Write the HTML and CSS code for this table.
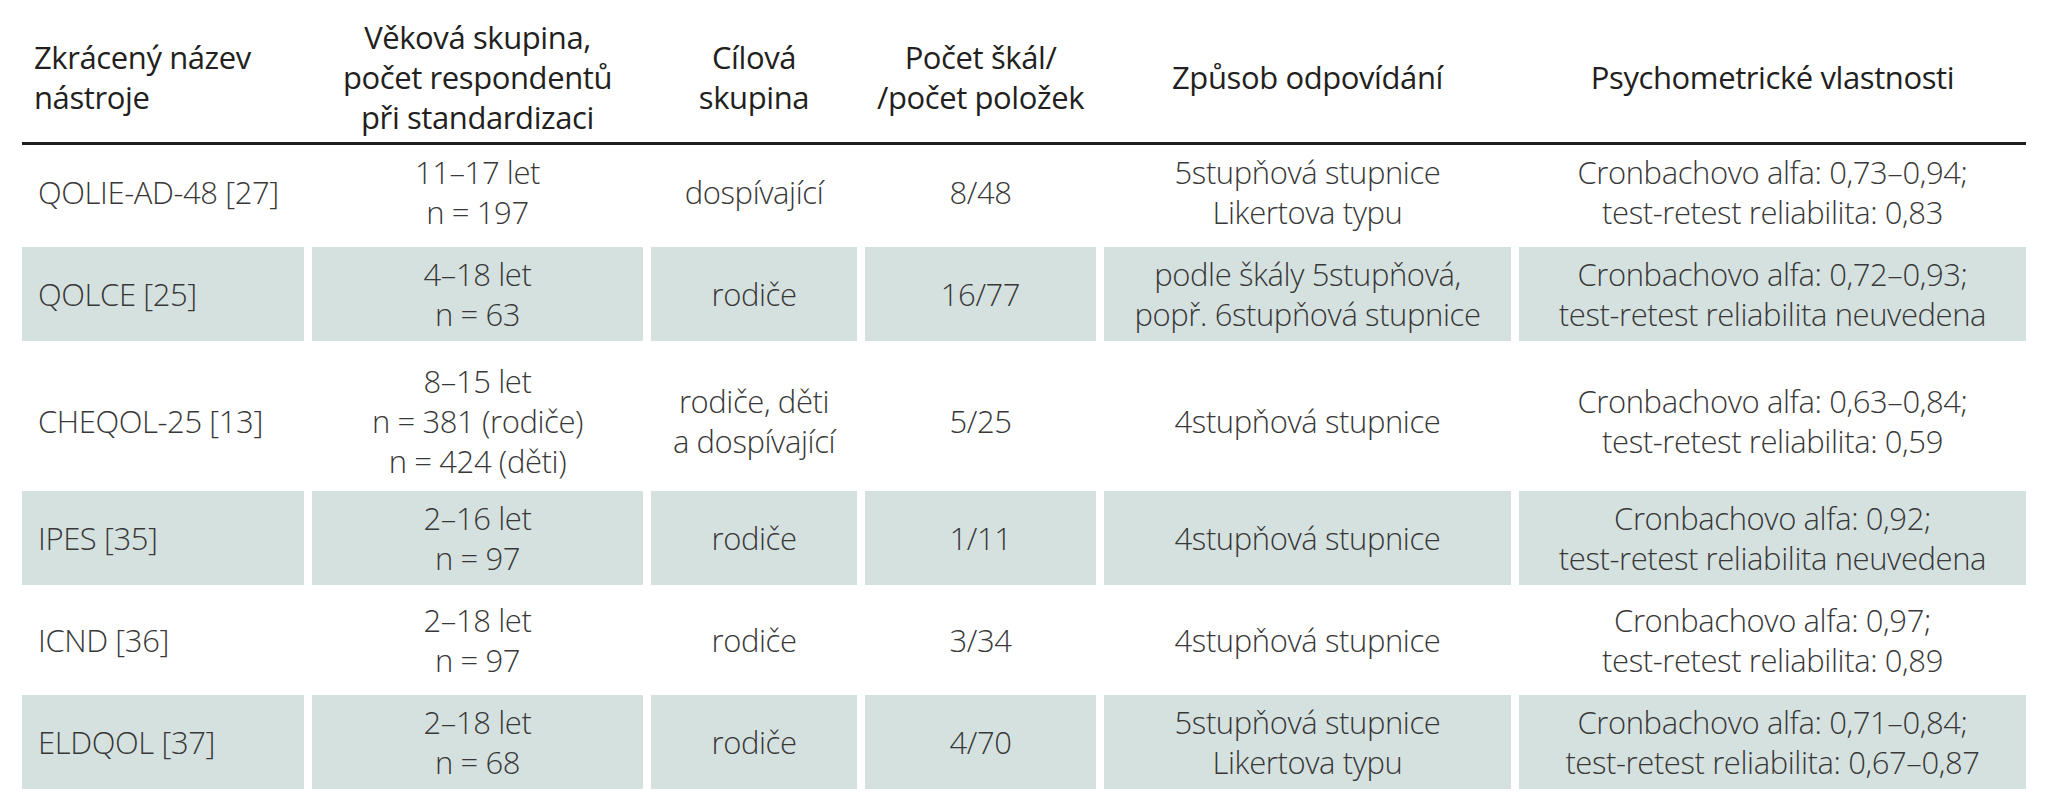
FILE: index.html
```html
<!DOCTYPE html>
<html lang="cs">
<head>
<meta charset="utf-8">
<title>Nástroje</title>
<link rel="stylesheet" href="styles.css">
</head>
<body>
<div class="table">
  <div class="row head">
    <div class="cell first">Zkrácený název<br>nástroje</div>
    <div class="cell">Věková skupina,<br>počet respondentů<br>při standardizaci</div>
    <div class="cell">Cílová<br>skupina</div>
    <div class="cell">Počet škál/<br>/počet položek</div>
    <div class="cell">Způsob odpovídání</div>
    <div class="cell">Psychometrické vlastnosti</div>
  </div>
  <div class="rule"></div>
  <div class="rows">
    <div class="row">
      <div class="cell first">QOLIE-AD-48 [27]</div>
      <div class="cell">11–17 let<br>n = 197</div>
      <div class="cell">dospívající</div>
      <div class="cell">8/48</div>
      <div class="cell">5stupňová stupnice<br>Likertova typu</div>
      <div class="cell">Cronbachovo alfa: 0,73–0,94;<br>test-retest reliabilita: 0,83</div>
    </div>
    <div class="row shaded">
      <div class="cell first">QOLCE [25]</div>
      <div class="cell">4–18 let<br>n = 63</div>
      <div class="cell">rodiče</div>
      <div class="cell">16/77</div>
      <div class="cell">podle škály 5stupňová,<br>popř. 6stupňová stupnice</div>
      <div class="cell">Cronbachovo alfa: 0,72–0,93;<br>test-retest reliabilita neuvedena</div>
    </div>
    <div class="row tall">
      <div class="cell first">CHEQOL-25 [13]</div>
      <div class="cell">8–15 let<br>n = 381 (rodiče)<br>n = 424 (děti)</div>
      <div class="cell">rodiče, děti<br>a dospívající</div>
      <div class="cell">5/25</div>
      <div class="cell">4stupňová stupnice</div>
      <div class="cell">Cronbachovo alfa: 0,63–0,84;<br>test-retest reliabilita: 0,59</div>
    </div>
    <div class="row shaded">
      <div class="cell first">IPES [35]</div>
      <div class="cell">2–16 let<br>n = 97</div>
      <div class="cell">rodiče</div>
      <div class="cell">1/11</div>
      <div class="cell">4stupňová stupnice</div>
      <div class="cell">Cronbachovo alfa: 0,92;<br>test-retest reliabilita neuvedena</div>
    </div>
    <div class="row">
      <div class="cell first">ICND [36]</div>
      <div class="cell">2–18 let<br>n = 97</div>
      <div class="cell">rodiče</div>
      <div class="cell">3/34</div>
      <div class="cell">4stupňová stupnice</div>
      <div class="cell">Cronbachovo alfa: 0,97;<br>test-retest reliabilita: 0,89</div>
    </div>
    <div class="row shaded">
      <div class="cell first">ELDQOL [37]</div>
      <div class="cell">2–18 let<br>n = 68</div>
      <div class="cell">rodiče</div>
      <div class="cell">4/70</div>
      <div class="cell">5stupňová stupnice<br>Likertova typu</div>
      <div class="cell">Cronbachovo alfa: 0,71–0,84;<br>test-retest reliabilita: 0,67–0,87</div>
    </div>
  </div>
</div>
</body>
</html>
```
FILE: styles.css
```css
html, body {
  margin: 0;
  padding: 0;
  background: #ffffff;
}

body {
  font-family: "Open Sans", "Noto Sans", sans-serif;
  color: #383838;
}

.table {
  width: 2004px;
  margin-left: 22px;
  display: flex;
  flex-direction: column;
}

.row {
  display: grid;
  grid-template-columns: 282px 331px 206px 231px 407px 507px;
  column-gap: 8px;
  height: 94px;
}

.row.head {
  height: 120px;
  padding-top: 17px;
  margin-bottom: 5px;
  color: #231f20;
}

.row.tall {
  height: 134px;
}

.row.tall .cell {
  padding-top: 10px;
}

.rule {
  height: 3px;
  background: #1e1e1e;
}

.rows {
  display: flex;
  flex-direction: column;
  gap: 8px;
}

.cell {
  display: flex;
  align-items: center;
  justify-content: center;
  text-align: center;
  font-size: 31px;
  line-height: 40px;
  font-weight: 300;
  letter-spacing: -0.4px;
}

.head .cell {
  font-weight: 400;
}

.cell.first {
  justify-content: flex-start;
  text-align: left;
  padding-left: 16px;
}

.head .cell.first {
  padding-left: 12px;
}

.shaded .cell {
  background: #d5e1df;
}
```
